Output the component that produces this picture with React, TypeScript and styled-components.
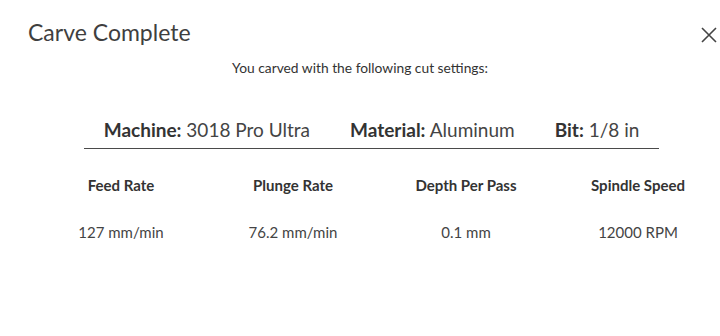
import React from "react";
import styled, { createGlobalStyle } from "styled-components";

const Global = createGlobalStyle`
  html, body { margin: 0; padding: 0; background: #fff; }
  body { font-family: Lato, "Open Sans", sans-serif; color: #333; }
`;

const Dialog = styled.div`
  width: 720px;
  height: 336px;
  box-sizing: border-box;
  padding-top: 18px;
  overflow: hidden;
`;

const Header = styled.div`
  display: flex;
  justify-content: space-between;
  align-items: center;
  padding: 0 1px 0 28px;
  height: 28px;
`;

const Title = styled.h2`
  margin: 0;
  font-size: 23px;
  font-weight: 400;
  color: #3f3f3f;
`;

const Close = styled.button`
  border: 0;
  background: none;
  padding: 0;
  width: 20px;
  height: 20px;
  display: flex;
  align-items: center;
  justify-content: center;
  margin-top: 6px;
  cursor: pointer;
`;

const Subtitle = styled.p`
  margin: 13px 0 0;
  text-align: center;
  font-size: 13.8px;
  color: #333;
`;

const Summary = styled.div`
  margin: 42px 0 0 84px;
  width: 575px;
  display: flex;
  justify-content: center;
  gap: 40px;
  padding-bottom: 7px;
  border-bottom: 1.5px solid #4a4a4a;
  font-size: 19px;
  color: #444;
`;

const Item = styled.span`
  white-space: nowrap;
  b { font-weight: 700; color: #333; }
`;

const Table = styled.div`
  margin: 27px 0 0 38px;
  display: grid;
  grid-template-columns: 166px 178px 168px 176px;
  row-gap: 29px;
  text-align: center;
  font-size: 15px;
`;

const Head = styled.div`
  font-weight: 700;
  color: #333;
  white-space: nowrap;
`;

const Cell = styled.div`
  color: #444;
  white-space: nowrap;
`;

const heads = ["Feed Rate", "Plunge Rate", "Depth Per Pass", "Spindle Speed"];
const vals = ["127 mm/min", "76.2 mm/min", "0.1 mm", "12000 RPM"];

export default function App() {
  return (
    <Dialog>
      <Global />
      <Header>
        <Title>Carve Complete</Title>
        <Close aria-label="close">
          <svg width="18" height="18" viewBox="0 0 18 18">
            <path d="M2 2 L16 16 M16 2 L2 16" stroke="#444" strokeWidth="1.6" fill="none" />
          </svg>
        </Close>
      </Header>
      <Subtitle>You carved with the following cut settings:</Subtitle>
      <Summary>
        <Item><b>Machine:</b> 3018 Pro Ultra</Item>
        <Item><b>Material:</b> Aluminum</Item>
        <Item><b>Bit:</b> 1/8 in</Item>
      </Summary>
      <Table>
        {heads.map((h) => <Head key={h}>{h}</Head>)}
        {vals.map((v) => <Cell key={v}>{v}</Cell>)}
      </Table>
    </Dialog>
  );
}
